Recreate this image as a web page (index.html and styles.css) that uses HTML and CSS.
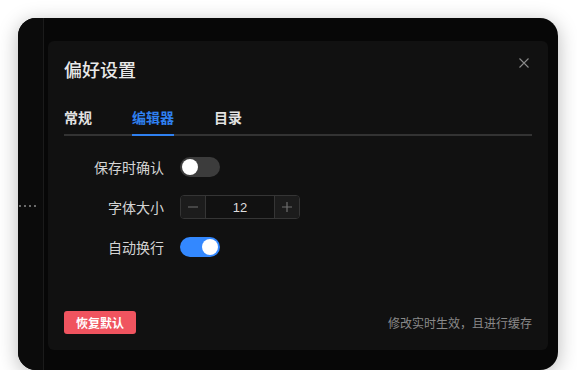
FILE: index.html
```html
<!DOCTYPE html>
<html>
<head>
  <title>偏好设置</title>
  <meta name="viewport" content="width=device-width, initial-scale=1">
  <link rel="stylesheet" href="styles.css">
</head>
<body>
  <div class="window">
    <div class="sidebar">
      <svg class="grip" width="17" height="2" viewBox="0 0 17 2">
        <rect x="0" y="0" width="2" height="2" fill="#6a6a6a"/>
        <rect x="5" y="0" width="2" height="2" fill="#6a6a6a"/>
        <rect x="10" y="0" width="2" height="2" fill="#6a6a6a"/>
        <rect x="15" y="0" width="2" height="2" fill="#6a6a6a"/>
      </svg>
    </div>
    <div class="main">
      <div class="dialog">
        <h2 class="title">偏好设置</h2>
        <button class="close" type="button" aria-label="关闭">
          <svg width="10" height="10" viewBox="0 0 10 10"><path d="M0.5 0.5L9.5 9.5M9.5 0.5L0.5 9.5" stroke="#8a8a8a" stroke-width="1.1" fill="none"/></svg>
        </button>

        <div class="tabs">
          <span class="tab">常规</span>
          <span class="tab active">编辑器</span>
          <span class="tab">目录</span>
        </div>

        <div class="rows">
          <div class="row">
            <label class="label">保存时确认</label>
            <span class="switch"><span class="knob"></span></span>
          </div>
          <div class="row">
            <label class="label">字体大小</label>
            <div class="stepper">
              <span class="step">
                <svg width="10" height="10" viewBox="0 0 10 10"><path d="M0 5H10" stroke="#6e6e6e" stroke-width="1.2"/></svg>
              </span>
              <span class="value">12</span>
              <span class="step">
                <svg width="10" height="10" viewBox="0 0 10 10"><path d="M0 5H10M5 0V10" stroke="#6e6e6e" stroke-width="1.2"/></svg>
              </span>
            </div>
          </div>
          <div class="row">
            <label class="label">自动换行</label>
            <span class="switch on"><span class="knob"></span></span>
          </div>
        </div>

        <div class="footer">
          <button class="reset" type="button">恢复默认</button>
          <span class="hint">修改实时生效，且进行缓存</span>
        </div>
      </div>
    </div>
  </div>
</body>
</html>
```

FILE: styles.css
```css
body { margin: 0; background: #ffffff; font-family: "Noto Sans CJK SC", "Liberation Sans", sans-serif; }

.window { display: flex; width: 540px; height: 352px; margin: 18px 0 0 18px; background: #070707; border-radius: 18px; overflow: hidden; box-shadow: 0 4px 20px rgba(0, 0, 0, 0.28); }
.sidebar { width: 25px; background: #0b0b0b; border-right: 1px solid #1b1b1b; display: flex; align-items: center; }
.grip { margin: 24px 0 0 1px; display: block; }
.main { flex: 1; padding: 23px 10px 20px 4px; }

.dialog { position: relative; box-sizing: border-box; width: 500px; height: 309px; background: #111111; border-radius: 6px; padding: 16px; display: flex; flex-direction: column; }
.title { margin: 0; font-size: 18px; line-height: 24px; font-weight: 500; color: #e8e8e8; }
.close { position: absolute; top: 17px; right: 19px; width: 10px; height: 10px; padding: 0; border: none; background: none; display: flex; }

.tabs { display: flex; gap: 40px; margin-top: 26px; border-bottom: 2px solid #333333; }
.tab { font-size: 14px; line-height: 20px; font-weight: 700; color: #e2e2e2; padding-bottom: 7px; margin-bottom: -2px; border-bottom: 2px solid transparent; }
.tab.active { color: #2f80f0; border-bottom-color: #2f80f0; }

.rows { display: flex; flex-direction: column; gap: 16px; margin-top: 19px; }
.row { display: flex; align-items: center; gap: 16px; height: 24px; }
.label { width: 100px; text-align: right; font-size: 14px; color: #d4d4d4; }

.switch { position: relative; box-sizing: border-box; width: 40px; height: 20px; border-radius: 10px; background: #3c3c3c; padding: 2px; display: flex; }
.switch.on { background: #3388ff; justify-content: flex-end; }
.knob { width: 16px; height: 16px; border-radius: 50%; background: #ffffff; }

.stepper { display: flex; box-sizing: border-box; width: 120px; height: 24px; border: 1px solid #353535; border-radius: 4px; overflow: hidden; }
.step { width: 24px; background: #1c1c1c; display: flex; align-items: center; justify-content: center; }
.step:first-child { border-right: 1px solid #353535; }
.step:last-child { border-left: 1px solid #353535; }
.value { flex: 1; background: #111111; color: #dddddd; font-size: 13px; display: flex; align-items: center; justify-content: center; font-family: "Liberation Sans", sans-serif; }

.footer { margin-top: auto; display: flex; align-items: center; justify-content: space-between; }
.reset { height: 23px; padding: 0 12px; border: none; border-radius: 3px; background: #f0545f; color: #ffffff; font-family: inherit; font-size: 12px; font-weight: 700; }
.hint { font-size: 12px; color: #8a8a8a; }
```
